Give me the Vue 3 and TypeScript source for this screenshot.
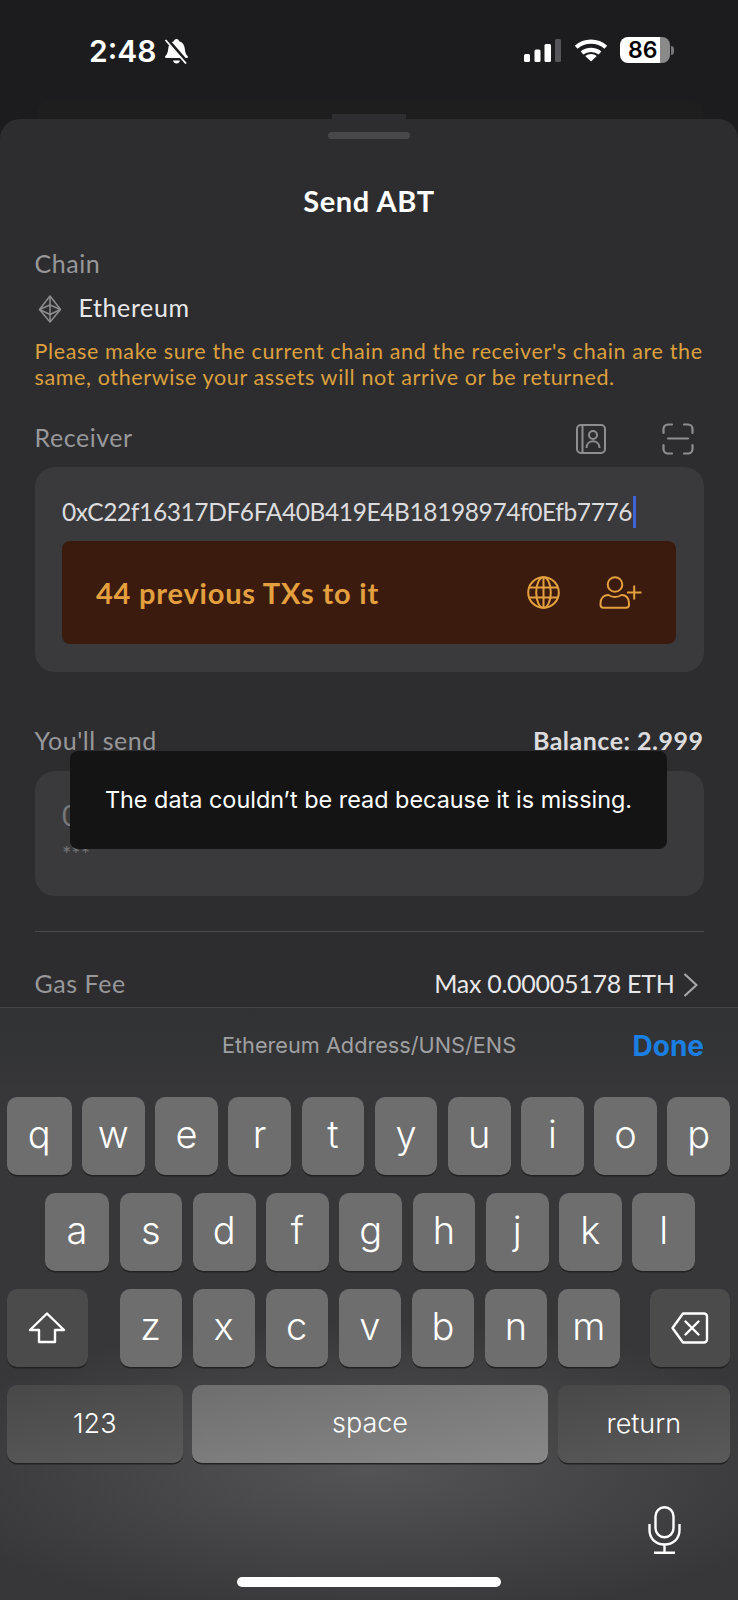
<script setup lang="ts">
const rowOne = ['q', 'w', 'e', 'r', 't', 'y', 'u', 'i', 'o', 'p']
const rowTwo = ['a', 's', 'd', 'f', 'g', 'h', 'j', 'k', 'l']
const rowThree = ['z', 'x', 'c', 'v', 'b', 'n', 'm']
</script>

<template>
  <div class="phone">
    <div class="status">
      <div class="back-sheet"></div>
      <div class="status-left">
        <span class="time">2:48</span>
        <svg class="bell" width="25" height="26" viewBox="0 0 25 26">
          <path d="M12.500 1c1.500 0 2.500 1 2.700 2.300 3.500 1 5.300 3.800 5.600 7.500.2 3.400 1 5.600 2.900 7.400.6.700.2 1.800-.8 1.800H2.100c-1 0-1.400-1.100-.8-1.800 1.900-1.800 2.700-4 2.900-7.400.3-3.700 2.100-6.500 5.600-7.500.2-1.300 1.200-2.300 2.700-2.300z" fill="#fff" />
          <path d="M9 22.500h7c-.4 1.700-1.800 3-3.500 3s-3.100-1.300-3.500-3z" fill="#fff" />
          <path d="M2.500 1l20 23" stroke="#1c1c1e" stroke-width="4" />
          <path d="M1.500 2l20.500 23.500" stroke="#fff" stroke-width="1.800" />
        </svg>
      </div>
      <div class="status-right">
        <svg class="signal" width="37" height="23" viewBox="0 0 37 23">
          <rect x="0" y="15" width="6" height="8" rx="1.500" fill="#fff" />
          <rect x="10.500" y="10.500" width="6" height="12.500" rx="1.500" fill="#fff" />
          <rect x="20.500" y="5" width="6.500" height="18" rx="1.500" fill="#fff" />
          <rect x="31" y="0" width="6" height="23" rx="1.500" fill="#55555a" />
        </svg>
        <svg class="wifi" width="34" height="24" viewBox="0 0 34 24">
          <path d="M2.200 9.200C10.500 1.800 23.500 1.800 31.800 9.200" fill="none" stroke="#fff" stroke-width="4.200" />
          <path d="M8 15C13 10.700 21 10.700 26 15" fill="none" stroke="#fff" stroke-width="4.200" />
          <path d="M17 23.500l-5.800-5.600c3.300-2.700 8.300-2.700 11.600 0z" fill="#fff" />
        </svg>
        <div class="battery">
          <div class="battery-body"><span>86</span></div>
          <div class="battery-nub"></div>
        </div>
      </div>
    </div>

    <div class="sheet">
      <div class="sheet-tab"></div>
      <div class="handle"></div>
      <h1 class="title">Send ABT</h1>

      <div class="label chain-label">Chain</div>
      <div class="chain-row">
        <svg width="24" height="28" viewBox="0 0 24 28" fill="none" stroke="#8e8e90" stroke-width="1.500" stroke-linejoin="round">
          <path d="M12 1L1.500 14.500 12 27 22.500 14.500z" />
          <path d="M12 1v26M1.500 14.500L12 10l10.500 4.500M1.500 14.500L12 19.500l10.500-5" />
        </svg>
        <span class="chain-name">Ethereum</span>
      </div>
      <p class="warning">Please make sure the current chain and the receiver's chain are the same, otherwise your assets will not arrive or be returned.</p>

      <div class="receiver-row">
        <span class="label">Receiver</span>
        <svg class="contact-icon" width="30" height="30" viewBox="0 0 30 30" fill="none" stroke="#8e8e90" stroke-width="2">
          <rect x="1" y="1" width="28" height="28" rx="4" />
          <path d="M6.500 1v28" />
          <circle cx="17" cy="11" r="4" />
          <path d="M10.500 24c0-9 13-9 13 0" />
        </svg>
        <svg class="scan-icon" width="32" height="32" viewBox="0 0 32 32" fill="none" stroke="#8e8e90" stroke-width="2.200" stroke-linecap="round">
          <path d="M1.500 10V6a4.500 4.500 0 0 1 4.500-4.500h4M22 1.500h4A4.500 4.500 0 0 1 30.500 6v4M1.500 22v4A4.500 4.500 0 0 0 6 30.500h4M22 30.500h4a4.500 4.500 0 0 0 4.500-4.500v-4" />
          <path d="M6 15.500h20" />
        </svg>
      </div>

      <div class="card receiver-card">
        <div class="address"><span>0xC22f16317DF6FA40B419E4B18198974f0Efb7776</span><i class="caret"></i></div>
        <div class="tx-box">
          <span class="tx-text">44 previous TXs to it</span>
          <svg class="globe" width="33" height="33" viewBox="0 0 33 33" fill="none" stroke="#e4a03e" stroke-width="2">
            <circle cx="16.500" cy="16.500" r="15.300" />
            <ellipse cx="16.500" cy="16.500" rx="7.300" ry="15.300" />
            <path d="M16.500 1.200v30.600M2.800 11.500h27.400M2.800 21.500h27.400" />
          </svg>
          <svg class="person" width="43" height="33" viewBox="0 0 43 33" fill="none" stroke="#e4a03e" stroke-width="2">
            <circle cx="16" cy="8.500" r="7.300" />
            <path d="M1.500 27.500c0-5.500 3.500-8.500 8-8.500 2 1.300 4 2 6.500 2s4.500-.7 6.500-2c4.500 0 7.500 3 7.500 8.500v1c0 2-1.300 3.300-3 3.300h-22.500c-1.700 0-3-1.300-3-3.300z" />
            <path d="M28 16.500h14.500M35.200 9.500v14" />
          </svg>
        </div>
      </div>

      <div class="send-row">
        <span class="label">You'll send</span>
        <span class="balance">Balance: 2.999</span>
      </div>
      <div class="card send-card">
        <div class="amount">0</div>
        <div class="masked">***</div>
      </div>

      <div class="divider"></div>

      <div class="gas-row">
        <span class="label">Gas Fee</span>
        <span class="gas-value">Max 0.00005178 ETH</span>
        <svg width="15" height="24" viewBox="0 0 15 24" fill="none" stroke="#a8a8aa" stroke-width="2.200">
          <path d="M1.500 1l12 11-12 11" />
        </svg>
      </div>

      <div class="toast">The data couldn’t be read because it is missing.</div>
    </div>

    <div class="toolbar">
      <span class="hint">Ethereum Address/UNS/ENS</span>
      <span class="done">Done</span>
    </div>

    <div class="keyboard">
      <div class="row row-one">
        <div v-for="k in rowOne" :key="k" class="key">{{ k }}</div>
      </div>
      <div class="row row-two">
        <div v-for="k in rowTwo" :key="k" class="key">{{ k }}</div>
      </div>
      <div class="row row-three">
        <div class="key dark shift">
          <svg width="38" height="32" viewBox="0 0 38 32" fill="none" stroke="#fff" stroke-width="2.400" stroke-linejoin="round">
            <path d="M19 1.500L36 18H27V30H11V18H2z" />
          </svg>
        </div>
        <div v-for="k in rowThree" :key="k" class="key letter">{{ k }}</div>
        <div class="key dark backspace">
          <svg width="38" height="32" viewBox="0 0 38 32" fill="none" stroke="#fff" stroke-width="2.400" stroke-linejoin="round" stroke-linecap="round">
            <path d="M12 1.500H33a3 3 0 0 1 3 3V27.500a3 3 0 0 1-3 3H12L1.500 16z" />
            <path d="M14.500 9.500l13 13M27.500 9.500l-13 13" />
          </svg>
        </div>
      </div>
      <div class="row row-four">
        <div class="key fn num">123</div>
        <div class="key space">space</div>
        <div class="key fn ret">return</div>
      </div>
      <div class="mic-row">
        <svg width="33" height="48" viewBox="0 0 33 48" fill="none" stroke="#fff" stroke-width="2.400">
          <rect x="7.500" y="1.200" width="18" height="30" rx="9" />
          <path d="M1.500 18v6c0 9 6.500 14.500 15 14.500s15-5.500 15-14.500v-6" />
          <path d="M16.500 38.500v8M6 46.800h21" />
        </svg>
      </div>
      <div class="home"></div>
    </div>
  </div>
</template>

<style scoped>
.phone {
  width: 738px;
  height: 1600px;
  overflow: hidden;
  display: flex;
  flex-direction: column;
  background: #1c1c1e;
  font-family: Lato, "Noto Sans", sans-serif;
}

.status {
  position: relative;
  height: 119px;
  flex: none;
  display: flex;
  justify-content: space-between;
  align-items: flex-start;
  padding: 37px 64px 0 89px;
  box-sizing: border-box;
  font-family: Inter, sans-serif;
  color: #fff;
}

.back-sheet {
  position: absolute;
  left: 38px;
  right: 35px;
  top: 100px;
  bottom: 0;
  background: #1e1e1e;
  border-radius: 12px 12px 0 0;
}

.status-left {
  display: flex;
  align-items: center;
  gap: 8px;
  height: 26px;
  margin-top: 1px;
}

.time {
  font-size: 30px;
  font-weight: 600;
  line-height: 26px;
}

.status-right {
  display: flex;
  align-items: center;
  height: 26px;
}

.signal {
  margin-right: 13px;
}

.wifi {
  margin-right: 12px;
}

.battery {
  display: flex;
  align-items: center;
}

.battery-body {
  width: 50px;
  height: 26px;
  border-radius: 8px;
  background: linear-gradient(to right, #fff 0, #fff 40px, #8a8a8a 40px);
  color: #000;
  font-size: 23px;
  font-weight: 600;
  line-height: 26px;
  padding-left: 8px;
  box-sizing: border-box;
}

.battery-nub {
  width: 3px;
  height: 9px;
  margin-left: 1px;
  background: #77777a;
  border-radius: 0 3px 3px 0;
}

.sheet {
  position: relative;
  height: 888px;
  flex: none;
  box-sizing: border-box;
  padding: 0 34.5px;
  background: #2d2d2f;
  border-radius: 20px 20px 0 0;
  color: #e8e8ea;
}

.sheet-tab {
  position: absolute;
  top: -5px;
  left: 332px;
  width: 74px;
  height: 5px;
  background: #2e2e30;
}

.handle {
  width: 82px;
  height: 7px;
  margin: 13px auto 0;
  border-radius: 4px;
  background: #48484a;
}

.title {
  margin: 47px 0 0;
  font-size: 29px;
  letter-spacing: 0.6px;
  line-height: 30px;
  font-weight: 700;
  text-align: center;
  color: #fff;
}

.label {
  height: 30px;
  font-size: 25px;
  letter-spacing: 0.55px;
  line-height: 26px;
  color: #98989a;
}

.chain-label {
  margin-top: 34px;
}

.chain-row {
  display: flex;
  align-items: center;
  height: 30px;
  margin-top: 14px;
  gap: 17px;
  padding-left: 3px;
}

.chain-name {
  height: 30px;
  font-size: 25px;
  letter-spacing: 0.6px;
  line-height: 26px;
}

.warning {
  margin: 14px 0 0;
  font-size: 21.5px;
  letter-spacing: 0.63px;
  line-height: 26px;
  color: #dca03e;
}

.receiver-row {
  display: flex;
  align-items: center;
  height: 32px;
  margin-top: 33px;
}

.receiver-row .label {
  flex: 1;
}

.contact-icon {
  margin-right: 56px;
}

.scan-icon {
  margin-right: 10px;
}

.card {
  background: #3a3a3c;
  border-radius: 20px;
}

.receiver-card {
  margin-top: 12px;
  padding: 30px 27.5px 28px;
}

.address {
  display: flex;
  align-items: center;
  height: 30px;
  font-size: 24.5px;
  letter-spacing: -0.39px;
  line-height: 30px;
  color: #dcdcde;
  white-space: nowrap;
}

.caret {
  width: 3px;
  height: 32px;
  margin-left: 1px;
  background: #3f63d8;
  flex: none;
}

.tx-box {
  display: flex;
  align-items: center;
  height: 103px;
  margin-top: 14px;
  padding: 0 34px;
  border-radius: 8px;
  background: #3a1b0e;
  box-sizing: border-box;
}

.tx-text {
  flex: 1;
  font-size: 29px;
  letter-spacing: 0.8px;
  font-weight: 700;
  color: #e4a03e;
}

.globe {
  margin-right: 39px;
}

.send-row {
  display: flex;
  justify-content: space-between;
  align-items: center;
  height: 30px;
  margin-top: 55px;
}

.balance {
  height: 30px;
  font-size: 25px;
  letter-spacing: 0.5px;
  line-height: 27px;
  font-weight: 700;
  color: #dcdcde;
}

.send-card {
  margin-top: 14px;
  height: 125px;
  padding: 26px 27.5px 0;
  box-sizing: border-box;
}

.amount {
  font-size: 28px;
  line-height: 36px;
  color: #77777a;
}

.masked {
  margin-top: 9px;
  font-size: 22px;
  line-height: 24px;
  color: #77777a;
}

.divider {
  height: 1px;
  margin-top: 35px;
  background: #4c4c4e;
}

.gas-row {
  display: flex;
  align-items: center;
  height: 30px;
  margin-top: 38px;
}

.gas-row .label {
  flex: 1;
}

.gas-value {
  height: 30px;
  font-size: 25px;
  letter-spacing: -0.27px;
  line-height: 26px;
  margin-right: 8px;
}

.gas-row svg {
  margin-right: 6px;
}

.toast {
  position: absolute;
  left: 70px;
  top: 632px;
  width: 597px;
  height: 98px;
  box-sizing: border-box;
  padding-top: 34px;
  border-radius: 8px;
  background: #141414;
  color: #fff;
  font-family: Inter, sans-serif;
  font-size: 23.4px;
  line-height: 30px;
  text-align: center;
}

.toolbar {
  position: relative;
  height: 78px;
  flex: none;
  display: flex;
  align-items: center;
  justify-content: center;
  box-sizing: border-box;
  border-top: 1px solid #454547;
  background: linear-gradient(#313234, #363638);
  font-family: Inter, sans-serif;
}

.hint {
  padding-bottom: 3px;
  font-size: 21.7px;
  color: #a0a0a2;
}

.done {
  position: absolute;
  right: 34px;
  top: 21px;
  font-size: 28px;
  font-weight: 700;
  color: #1a7fe0;
}

.keyboard {
  flex: 1;
  display: flex;
  flex-direction: column;
  padding-top: 12px;
  background: radial-gradient(ellipse 460px 150px at 50% 385px, #545456 0%, #37373a 100%);
  font-family: Inter, sans-serif;
}

.row {
  display: flex;
  gap: 10.5px;
  height: 78px;
  margin-bottom: 18px;
  flex: none;
}

.row-one {
  padding: 0 8px 0 7px;
}

.row-one .key:first-child {
  flex: none;
  width: 64.5px;
}

.row-two {
  padding: 0 43px 0 45px;
}

.row-two .key:first-child {
  flex: none;
  width: 64px;
}

.row-three {
  gap: 10.75px;
  padding: 0 8px 0 7px;
}

.row-four {
  gap: 9.5px;
  padding: 0 8px 0 7px;
  margin-bottom: 0;
}

.key {
  flex: 1;
  display: flex;
  align-items: center;
  justify-content: center;
  padding-bottom: 4px;
  box-sizing: border-box;
  border-radius: 10px;
  background: #6e6e6e;
  box-shadow: 0 1.5px 0 #222;
  color: #fff;
  font-size: 38px;
  font-weight: 300;
}

.key.letter {
  flex: none;
  width: 62.3px;
}

.key.dark {
  flex: none;
  padding-bottom: 0;
  background: #4b4b4b;
}

.shift {
  width: 80.5px;
  margin-right: 21.25px;
}

.backspace {
  width: 80px;
  margin-left: 19.05px;
}

.key.fn,
.key.space {
  font-size: 27px;
  font-weight: 300;
  flex: none;
}

.key.fn {
  padding-bottom: 1px;
  background: linear-gradient(170deg, #484848, #5a5a5a);
}

.num {
  width: 175.5px;
}

.key.space {
  width: 356px;
  background: linear-gradient(170deg, #6e6e6e, #888);
}

.ret {
  width: 172.5px;
}

.mic-row {
  display: flex;
  justify-content: flex-end;
  padding-right: 57px;
  margin-top: 43px;
}

.home {
  width: 264px;
  height: 10px;
  margin: 23px auto 0;
  border-radius: 5px;
  background: #fff;
}
</style>
